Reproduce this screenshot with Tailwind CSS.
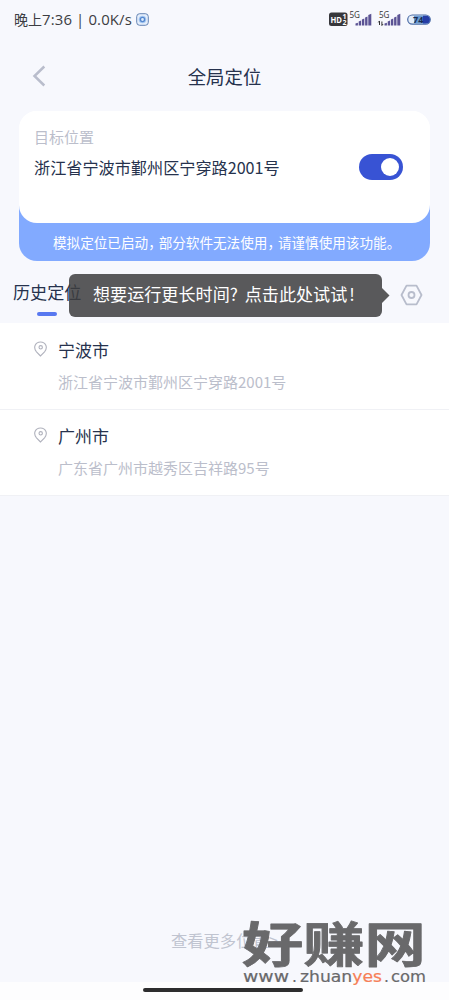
<!DOCTYPE html>
<html lang="zh-CN">
<head>
<meta charset="utf-8">
<meta name="viewport" content="width=device-width, initial-scale=1">
<title>全局定位</title>
<script src="https://cdn.jsdelivr.net/npm/@tailwindcss/browser@4"></script>
</head>
<body class="relative flex h-[1000px] w-[449px] flex-col overflow-hidden bg-[#f7f8fd] font-['Noto_Sans_CJK_SC',sans-serif] text-[#26324d]">
  <header class="flex h-[38px] shrink-0 items-center pr-[17px] pl-[14px]">
    <span class="w-[118px] text-[14px] leading-[20px] whitespace-pre text-[#3c3d42]">晚上<span class="font-['Open_Sans'] text-[14.9px] font-medium tracking-[0.15px]">7:36 | 0.0K/s</span></span>
    <svg class="ml-[4px]" width="13" height="13" viewBox="0 0 13 13" fill="none"><rect x=".7" y=".7" width="11.6" height="11.6" rx="3" fill="#e5eefb" stroke="#6584b4"/><circle cx="6.5" cy="6.5" r="3.8" fill="#a9cbf4"/><circle cx="6.5" cy="6.5" r="2.1" fill="#ddebfb" stroke="#5587ce" stroke-width="1.4"/></svg>
    <svg class="ml-auto" width="103" height="18" viewBox="0 0 103 18" font-family="Open Sans, sans-serif">
      <rect x="0" y="2.500" width="18.500" height="13.500" rx="2.5" fill="#37373b"/>
      <text x="1.500" y="12.800" font-size="9.500" font-weight="700" fill="#fff" textLength="11.500" lengthAdjust="spacingAndGlyphs">HD</text>
      <text x="13.500" y="9" font-size="7" font-weight="700" fill="#fff">1</text><text x="13.500" y="15.200" font-size="7" font-weight="700" fill="#fff">2</text>
      <text x="20.500" y="8.300" font-size="8.500" fill="#333" textLength="10.500" lengthAdjust="spacingAndGlyphs">5G</text>
      <g fill="#5b5394"><path d="M26.500 15.500v-2l2.400-.8v2.800zM29.700 15.500v-4l2.400-.9v4.900zM32.900 15.500v-6l2.400-1v7zM36.100 15.500V7.500l2.400-1v9zM39.300 15.500V5l3-1.300v11.800z"/><path d="M55.500 15.500v-2l2.400-.8v2.800zM58.700 15.500v-4l2.400-.9v4.900zM61.900 15.500v-6l2.400-1v7zM65.100 15.500V7.500l2.400-1v9zM68.300 15.500V5l3-1.300v11.800z"/></g>
      <text x="50" y="8.300" font-size="8.500" fill="#333" textLength="10.500" lengthAdjust="spacingAndGlyphs">5G</text>
      <path d="M50.500 15v-4M49.300 12.400l1.200-1.500M52.900 11.500v4M54.100 14 52.900 15.500" stroke="#333" fill="none"/>
      <rect x="78.700" y="5" width="22.600" height="9.200" rx="4.600" fill="#e5eef9" stroke="#4b6ca6" stroke-width="1.2"/>
      <path d="M85 5.700h12a3.900 3.900 0 0 1 0 7.800H85z" fill="#6a9bd2"/><path d="M94 5.700h3a3.900 3.900 0 0 1 0 7.800h-3z" fill="#263da6"/>
      <text x="84" y="12.800" font-size="9" font-weight="700" fill="#192c50">74</text>
    </svg>
  </header>

  <nav class="relative flex h-[73px] shrink-0 items-start justify-center pt-[25px]">
    <svg class="absolute top-[27px] left-[32px]" width="15" height="22" viewBox="0 0 15 22" fill="none"><path d="M12.300 1.500 2.500 11l9.800 9.500" stroke="#b9bdcc" stroke-width="2.500"/></svg>
    <h1 class="text-[18.4px] leading-[26px] font-normal">全局定位</h1>
  </nav>

  <section class="ml-[19px] flex h-[150px] w-[411px] shrink-0 flex-col rounded-[18px] bg-linear-to-b from-white from-50% to-[#82aaff] to-50%">
    <div class="flex h-[112px] items-start justify-between rounded-[18px] bg-white pr-[27px] pl-[15px]">
      <div>
        <p class="mt-[15px] text-[15px] leading-[22px] text-[#bbbecb]">目标位置</p>
        <p class="mt-[7px] text-[16.15px] leading-[24px] whitespace-nowrap">浙江省宁波市鄞州区宁穿路2001号</p>
      </div>
      <div class="mt-[43px] flex h-[26px] w-[44px] items-center justify-end rounded-full bg-[#3853d4] pr-[4px]"><span class="size-[18px] rounded-full bg-white"></span></div>
    </div>
    <p class="mt-[9px] flex pl-[34px] text-[13.6px] leading-[20px] whitespace-nowrap text-white"><span>模拟定位已启动</span><span class="w-[10.5px]">，</span><span>部分软件无法使用</span><span class="w-[10.5px]">，</span><span>请谨慎使用该功能。</span></p>
  </section>

  <section class="relative flex h-[62px] shrink-0 items-start pt-[18px] pl-[13px]">
    <div class="flex flex-col items-center text-[17.1px] leading-[26px]">历史定位<span class="mt-[7px] h-[4px] w-[20px] rounded-full bg-[#5878f0]"></span></div>
    <div class="absolute top-[13px] left-[69px] flex h-[43px] w-[313px] items-center rounded-[6px] bg-[#3d3d3e]/85 pl-[24px] text-[17.1px] leading-[26px] whitespace-nowrap text-white">
      <span class="-mt-[3px]">想要运行更长时间</span><span class="-mt-[3px] w-[15px]">?</span><span class="-mt-[3px]">点击此处试试<span class="ml-[2px]">!</span></span>
      <svg class="absolute top-[14px] left-[313px]" width="8" height="15" viewBox="0 0 8 15"><path d="M0 0 7.500 7.500 0 15z" fill="#59595a"/></svg>
    </div>
    <svg class="absolute top-[23px] left-[400px]" width="23" height="22" viewBox="0 0 23 22" fill="none" stroke="#b8bdcc" stroke-width="1.800" stroke-linejoin="round"><path d="M6.500 1.600h10l5 9.400-5 9.400h-10L1.500 11z"/><circle cx="11.500" cy="11" r="3"/></svg>
  </section>

  <ul class="shrink-0 bg-white">
    <li class="flex h-[87px] items-start border-b border-[#f0f1f5] pt-[14px] pl-[34px]">
      <svg class="mt-[4px]" width="13" height="16" viewBox="0 0 13 16" fill="none" stroke="#b0b2bd" stroke-width="1.100"><path d="M6.500 15 2.500 10.800C-1.200 6.500 1.300 1 6.500 1s7.700 5.500 4 9.800z"/><circle cx="6.700" cy="6.300" r="1.700"/></svg>
      <div class="ml-[11px]"><h2 class="text-[17px] leading-[26px] font-normal">宁波市</h2><p class="mt-[8px] text-[15px] leading-[22px] text-[#bbbecb]">浙江省宁波市鄞州区宁穿路2001号</p></div>
    </li>
    <li class="flex h-[86px] items-start border-b border-[#f0f1f5] pt-[13px] pl-[34px]">
      <svg class="mt-[4px]" width="13" height="16" viewBox="0 0 13 16" fill="none" stroke="#b0b2bd" stroke-width="1.100"><path d="M6.500 15 2.500 10.800C-1.200 6.500 1.300 1 6.500 1s7.700 5.500 4 9.800z"/><circle cx="6.700" cy="6.300" r="1.700"/></svg>
      <div class="ml-[11px]"><h2 class="text-[17px] leading-[26px] font-normal">广州市</h2><p class="mt-[8px] text-[15px] leading-[22px] text-[#bbbecb]">广东省广州市越秀区吉祥路95号</p></div>
    </li>
  </ul>

  <p class="mt-auto mb-[30px] pl-[171px] text-[16.3px] leading-[24px] text-[#c0c4d0]">查看更多位置&gt;</p>
  <footer class="flex h-[18px] shrink-0 justify-center bg-[#fdfdfe] pt-[6px] pr-[3px]"><span class="h-[4px] w-[160px] rounded-full bg-[#2d2d2e]"></span></footer>

  <svg class="absolute top-[915px] left-[240px]" width="190" height="75" viewBox="0 0 190 75">
    <g fill="#69696b" font-family="Noto Sans CJK SC, sans-serif" font-weight="700" stroke="#69696b" stroke-width=".8" stroke-linejoin="round">
      <text transform="translate(2 47) scale(1.250 .97)" font-size="49">好赚网</text>
    </g>
    <g font-family="DejaVu Sans, sans-serif" font-size="15.500" fill="#69696b" stroke="#69696b" stroke-width=".2">
      <text x="3" y="67" textLength="46" lengthAdjust="spacingAndGlyphs">www</text>
      <text x="52" y="67">.</text>
      <text x="60" y="67" textLength="82" lengthAdjust="spacingAndGlyphs">zhuan<tspan fill="#f67f57" stroke="#f67f57">yes</tspan></text>
      <text x="144" y="67">.</text>
      <text x="151" y="67" textLength="35" lengthAdjust="spacingAndGlyphs">com</text>
    </g>
  </svg>
</body>
</html>
